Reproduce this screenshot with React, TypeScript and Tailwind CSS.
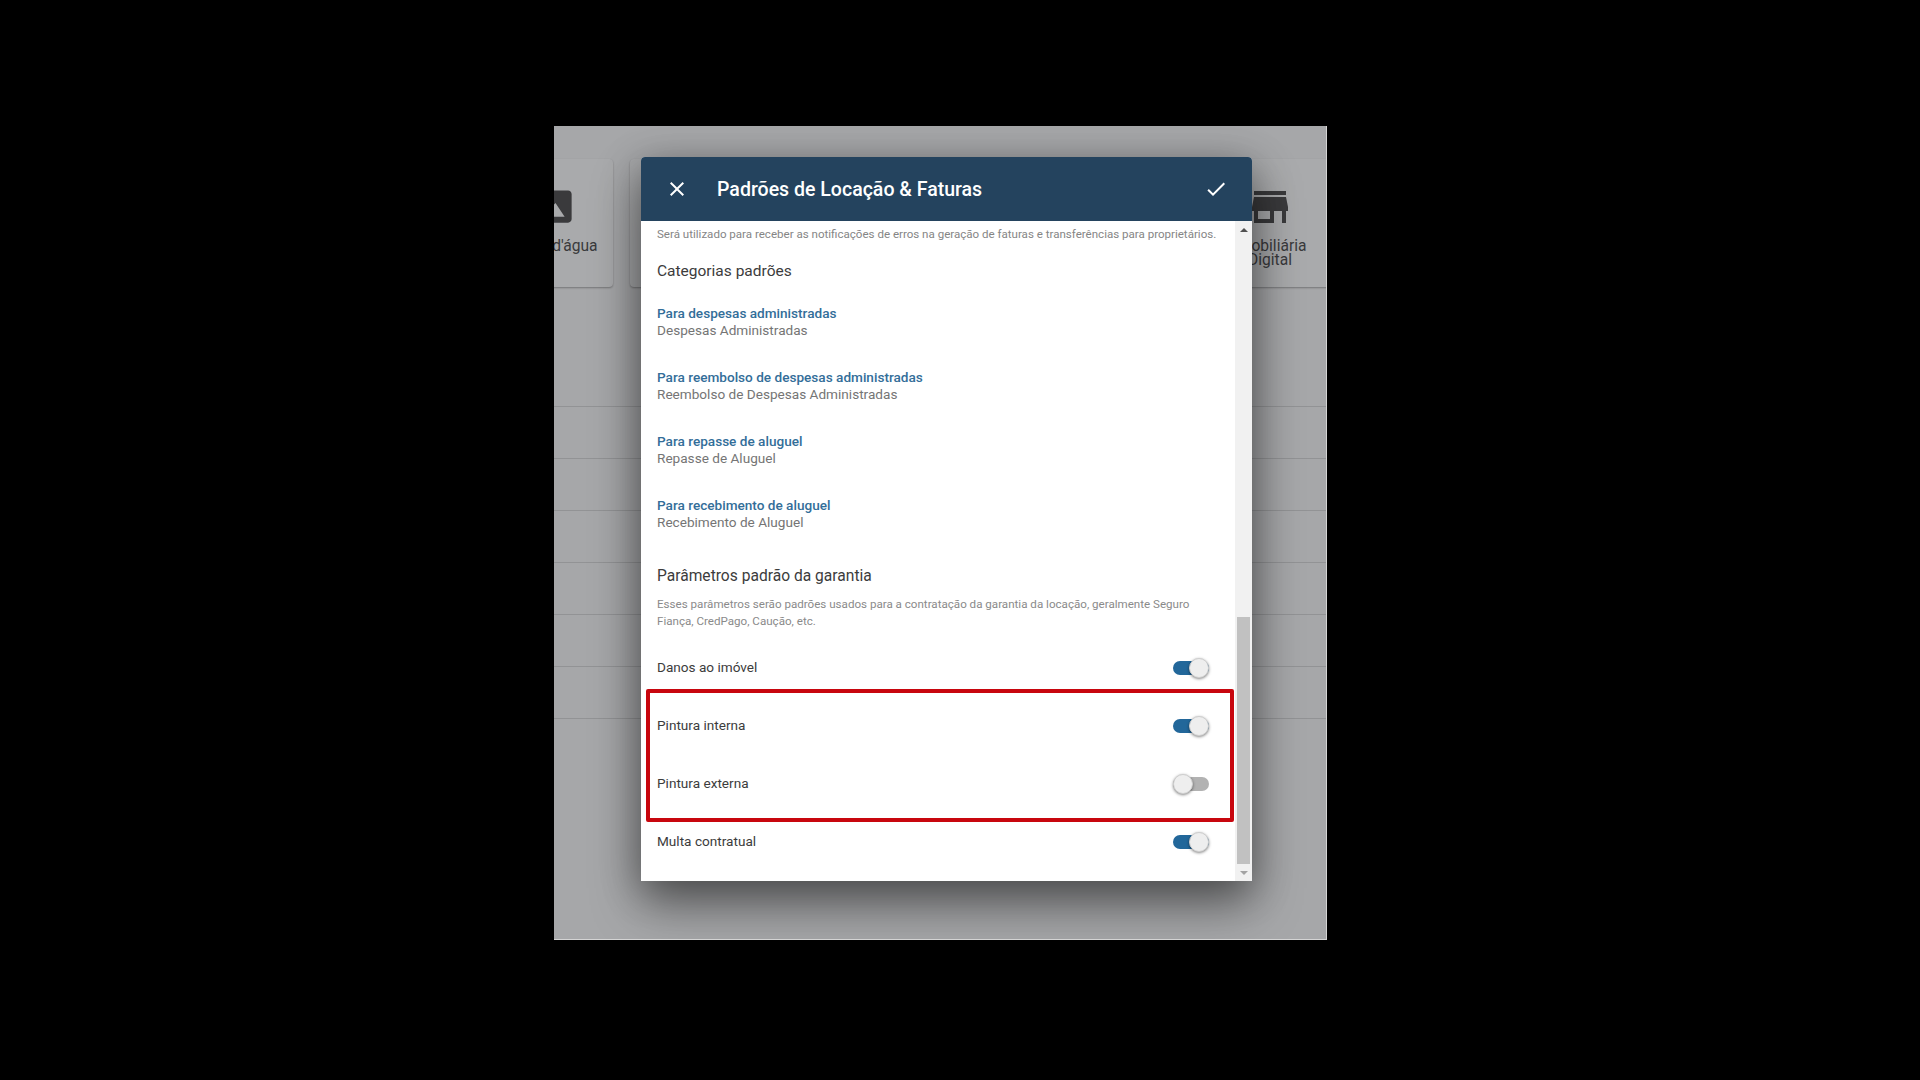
const categories = [
  { title: 'Para despesas administradas', value: 'Despesas Administradas' },
  { title: 'Para reembolso de despesas administradas', value: 'Reembolso de Despesas Administradas' },
  { title: 'Para repasse de aluguel', value: 'Repasse de Aluguel' },
  { title: 'Para recebimento de aluguel', value: 'Recebimento de Aluguel' },
]

function Toggle({ on }: { on: boolean }) {
  return (
    <div className="relative mt-[1px] h-[14px] w-[36px] shrink-0">
      <div className={`h-[14px] w-[36px] rounded-full ${on ? 'bg-[#22679a]' : 'bg-[#b2b2b2]'}`} />
      <div
        className={`absolute top-[-3px] h-[20px] w-[20px] rounded-full bg-[#eeeeee] border border-[#cfcfcf] shadow-[0_1px_3px_rgba(0,0,0,0.5)] ${on ? 'right-0' : 'left-0'}`}
      />
    </div>
  )
}

function ToggleRow({ label, on, className }: { label: string; on: boolean; className: string }) {
  return (
    <div className={`flex items-center justify-between pr-[26px] text-[13.6px] text-[#3c3c3c] ${className}`}>
      <span>{label}</span>
      <Toggle on={on} />
    </div>
  )
}

export default function App() {
  return (
    <div className="h-[1080px] w-[1920px] overflow-hidden bg-black pl-[554px] pt-[126px] font-['Roboto',sans-serif]">
      <div className="relative h-[814px] w-[773px] overflow-hidden border-r border-b border-[#d4d4d4] bg-[#a6a7a9]">
        {/* pagina atras do modal */}
        <div className="flex pt-[33px] text-[#3a3a3c]">
          <div className="ml-[-65px] flex h-[128px] w-[124px] shrink-0 flex-col items-center rounded-[4px] bg-[#a9aaac] pt-[26px] shadow-[0_1px_2px_rgba(0,0,0,0.3)]">
            <svg viewBox="0 0 24 24" className="ml-[8px] mb-[11px] h-[43px] w-[43px] shrink-0" fill="currentColor" fillRule="evenodd">
              <path d="M21 19V5c0-1.1-.9-2-2-2H5c-1.1 0-2 .9-2 2v14c0 1.1.9 2 2 2h14c1.1 0 2-.9 2-2zM12 10l5.1 7.7H5z" />
            </svg>
            <span className="whitespace-nowrap text-[15.6px] leading-[14px]">Marca d'água</span>
          </div>
          <div className="ml-[17px] h-[128px] w-[160px] shrink-0 rounded-[4px] bg-[#a9aaac] shadow-[0_1px_2px_rgba(0,0,0,0.3)]" />
          <div className="ml-[395px] flex h-[128px] w-[170px] shrink-0 flex-col items-center rounded-[4px] bg-[#a9aaac] pt-[24px] shadow-[0_1px_2px_rgba(0,0,0,0.3)]">
            <svg viewBox="0 0 24 24" className="h-[48px] w-[48px] shrink-0" fill="currentColor">
              <path d="M20 4H4v2h16V4zm1 10v-2l-1-5H4l-1 5v2h1v6h10v-6h4v6h2v-6h1zm-9 4H6v-4h6v4z" />
            </svg>
            <span className="mt-[8px] text-center text-[15.6px] leading-[14px]">
              Imobiliária
              <br />
              Digital
            </span>
          </div>
        </div>
        <div className="mt-[119px]">
          {[0, 1, 2, 3, 4, 5, 6].map((i) => (
            <div key={i} className="h-[52px] border-t border-[#929395]" />
          ))}
        </div>

        {/* modal */}
        <div className="absolute left-[87px] top-[31px] flex h-[724px] w-[611px] flex-col overflow-hidden rounded-t-[4px] bg-white shadow-[0_24px_50px_rgba(0,0,0,0.4),0_8px_40px_rgba(0,0,0,0.3)]">
          <div className="flex h-[64px] shrink-0 items-center bg-[#24435e] text-white">
            <svg viewBox="0 0 24 24" className="ml-[24px] h-[24px] w-[24px]" fill="currentColor">
              <path d="M19 6.41 17.59 5 12 10.59 6.41 5 5 6.41 10.59 12 5 17.59 6.41 19 12 13.41 17.59 19 19 17.59 13.41 12z" />
            </svg>
            <span className="ml-[28px] mt-[1px] text-[19.55px] font-medium">Padrões de Locação &amp; Faturas</span>
            <svg viewBox="0 0 24 24" className="ml-auto mr-[24px] h-[24px] w-[24px]" fill="currentColor">
              <path d="M9 16.17 4.83 12l-1.42 1.41L9 19 21 7l-1.41-1.41z" />
            </svg>
          </div>
          <div className="flex min-h-0 flex-1">
            <div className="min-w-0 flex-1 pl-[16px]">
              <p className="mt-[6px] whitespace-nowrap text-[11.55px] leading-[14px] text-[#858585]">
                Será utilizado para receber as notificações de erros na geração de faturas e transferências para proprietários.
              </p>
              <h3 className="mt-[20px] text-[15.5px] leading-[20px] text-[#3c3c3c]">Categorias padrões</h3>
              <div className="mt-[24px] flex flex-col gap-[30px]">
                {categories.map((c) => (
                  <div key={c.title} className="text-[13.6px] leading-[17px]">
                    <div className="font-medium text-[#336e99]">{c.title}</div>
                    <div className="text-[#757575]">{c.value}</div>
                  </div>
                ))}
              </div>
              <h3 className="mt-[35px] text-[15.6px] leading-[20px] text-[#3c3c3c]">Parâmetros padrão da garantia</h3>
              <p className="mt-[10px] pr-[16px] text-[11.6px] leading-[17px] text-[#8a8a8a]">
                Esses parâmetros serão padrões usados para a contratação da garantia da locação, geralmente Seguro Fiança, CredPago, Caução, etc.
              </p>
              <ToggleRow label="Danos ao imóvel" on className="mt-[27px] h-[20px]" />
              <ToggleRow label="Pintura interna" on className="mt-[38px] h-[20px]" />
              <ToggleRow label="Pintura externa" on={false} className="mt-[38px] h-[20px]" />
              <ToggleRow label="Multa contratual" on className="mt-[38px] h-[20px]" />
            </div>
            <div className="flex w-[17px] shrink-0 flex-col bg-[#f1f1f1]">
              <div className="flex h-[17px] items-center justify-center">
                <div className="h-0 w-0 border-x-[4px] border-b-[4px] border-x-transparent border-b-[#505050]" />
              </div>
              <div className="mx-[2px] mt-[379px] flex-1 bg-[#c1c1c1]" />
              <div className="flex h-[17px] items-center justify-center">
                <div className="h-0 w-0 border-x-[4px] border-t-[4px] border-x-transparent border-t-[#a3a3a3]" />
              </div>
            </div>
          </div>
        </div>

        {/* destaque vermelho */}
        <div className="absolute left-[92px] top-[563px] h-[133px] w-[588px] rounded-[2px] border-[4px] border-[#c8060e]" />
      </div>
    </div>
  )
}
